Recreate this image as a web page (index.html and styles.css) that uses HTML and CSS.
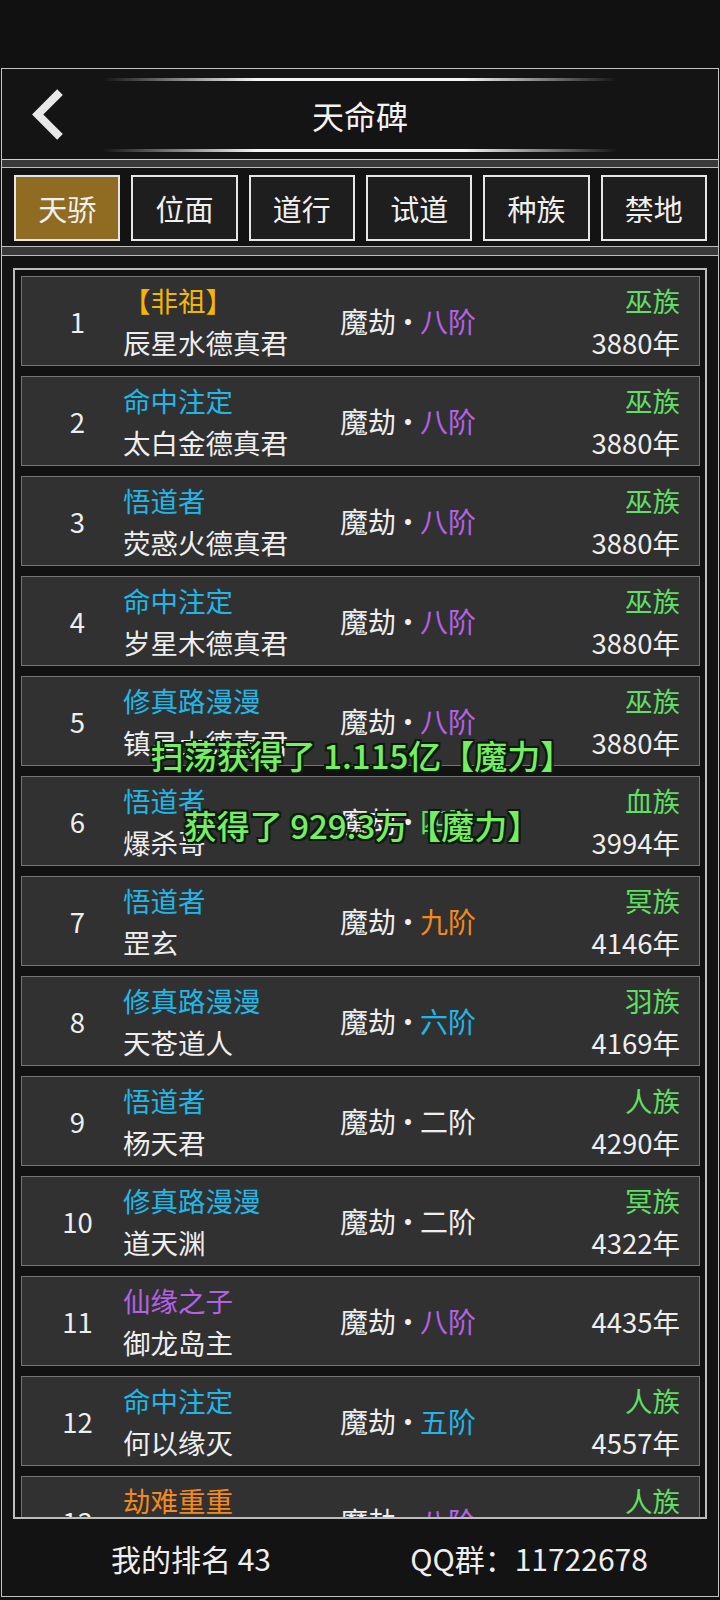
FILE: index.html
```
<!DOCTYPE html>
<html lang="zh-CN">
<head>
    <meta charset="UTF-8">
    <meta name="viewport" content="width=device-width, initial-scale=1.0">
    <title>天命碑</title>
    <link rel="stylesheet" href="styles.css">
</head>
<body>
    <div class="status-space"></div>

    <div class="frame">
        <div class="header">
            <div class="glow-line"></div>
            <div class="header-row">
                <a class="back" href="#">
                    <svg width="40" height="52" viewBox="0 0 40 52">
                        <polyline points="32,3.2 9.7,25.5 32,47.8" fill="none" stroke="#e8e8e8" stroke-width="8"/>
                    </svg>
                </a>
                <h1>天命碑</h1>
                <span></span>
            </div>
            <div class="glow-line"></div>
        </div>

        <div class="band"></div>

        <div class="tabs">
            <div class="tab active">天骄</div>
            <div class="tab">位面</div>
            <div class="tab">道行</div>
            <div class="tab">试道</div>
            <div class="tab">种族</div>
            <div class="tab">禁地</div>
        </div>

        <div class="band"></div>

        <div class="list-wrap">
            <div class="list">
                <div class="row">
                    <div class="rank">1</div>
                    <div class="who"><div class="gold">【非祖】</div><div>辰星水德真君</div></div>
                    <div class="realm">魔劫<span class="dot">·</span><span class="purple">八阶</span></div>
                    <div class="info"><div class="green">巫族</div><div>3880年</div></div>
                </div>
                <div class="row">
                    <div class="rank">2</div>
                    <div class="who"><div class="cyan">命中注定</div><div>太白金德真君</div></div>
                    <div class="realm">魔劫<span class="dot">·</span><span class="purple">八阶</span></div>
                    <div class="info"><div class="green">巫族</div><div>3880年</div></div>
                </div>
                <div class="row">
                    <div class="rank">3</div>
                    <div class="who"><div class="cyan">悟道者</div><div>荧惑火德真君</div></div>
                    <div class="realm">魔劫<span class="dot">·</span><span class="purple">八阶</span></div>
                    <div class="info"><div class="green">巫族</div><div>3880年</div></div>
                </div>
                <div class="row">
                    <div class="rank">4</div>
                    <div class="who"><div class="cyan">命中注定</div><div>岁星木德真君</div></div>
                    <div class="realm">魔劫<span class="dot">·</span><span class="purple">八阶</span></div>
                    <div class="info"><div class="green">巫族</div><div>3880年</div></div>
                </div>
                <div class="row">
                    <div class="rank">5</div>
                    <div class="who"><div class="cyan">修真路漫漫</div><div>镇星土德真君</div></div>
                    <div class="realm">魔劫<span class="dot">·</span><span class="purple">八阶</span></div>
                    <div class="info"><div class="green">巫族</div><div>3880年</div></div>
                </div>
                <div class="row">
                    <div class="rank">6</div>
                    <div class="who"><div class="cyan">悟道者</div><div>爆杀哥</div></div>
                    <div class="realm">魔劫<span class="dot">·</span><span class="green">四阶</span></div>
                    <div class="info"><div class="green">血族</div><div>3994年</div></div>
                </div>
                <div class="row">
                    <div class="rank">7</div>
                    <div class="who"><div class="cyan">悟道者</div><div>罡玄</div></div>
                    <div class="realm">魔劫<span class="dot">·</span><span class="orange">九阶</span></div>
                    <div class="info"><div class="green">冥族</div><div>4146年</div></div>
                </div>
                <div class="row">
                    <div class="rank">8</div>
                    <div class="who"><div class="cyan">修真路漫漫</div><div>天苍道人</div></div>
                    <div class="realm">魔劫<span class="dot">·</span><span class="cyan">六阶</span></div>
                    <div class="info"><div class="green">羽族</div><div>4169年</div></div>
                </div>
                <div class="row">
                    <div class="rank">9</div>
                    <div class="who"><div class="cyan">悟道者</div><div>杨天君</div></div>
                    <div class="realm">魔劫<span class="dot">·</span>二阶</div>
                    <div class="info"><div class="green">人族</div><div>4290年</div></div>
                </div>
                <div class="row">
                    <div class="rank">10</div>
                    <div class="who"><div class="cyan">修真路漫漫</div><div>道天渊</div></div>
                    <div class="realm">魔劫<span class="dot">·</span>二阶</div>
                    <div class="info"><div class="green">冥族</div><div>4322年</div></div>
                </div>
                <div class="row">
                    <div class="rank">11</div>
                    <div class="who"><div class="purple">仙缘之子</div><div>御龙岛主</div></div>
                    <div class="realm">魔劫<span class="dot">·</span><span class="purple">八阶</span></div>
                    <div class="info"><div>4435年</div></div>
                </div>
                <div class="row">
                    <div class="rank">12</div>
                    <div class="who"><div class="cyan">命中注定</div><div>何以缘灭</div></div>
                    <div class="realm">魔劫<span class="dot">·</span><span class="cyan">五阶</span></div>
                    <div class="info"><div class="green">人族</div><div>4557年</div></div>
                </div>
                <div class="row">
                    <div class="rank">13</div>
                    <div class="who"><div class="orange">劫难重重</div><div>风雨归人</div></div>
                    <div class="realm">魔劫<span class="dot">·</span><span class="purple">八阶</span></div>
                    <div class="info"><div class="green">人族</div><div>4620年</div></div>
                </div>
            </div>
        </div>

        <div class="footer">
            <div>我的排名 43</div>
            <div>QQ群：11722678</div>
        </div>

        <div class="toasts">
            <div class="toast">扫荡获得了 1.115亿【魔力】</div>
            <div class="toast">获得了 929.3万【魔力】</div>
        </div>
    </div>
</body>
</html>
```

FILE: styles.css
```
body {
    margin: 0;
    background-color: #111;
    color: #eee;
    font-family: "Noto Sans CJK SC", "Noto Sans", sans-serif;
}
.status-space {
    height: 68px;
}
.frame {
    position: relative;
    margin: 0 1px;
    border: 1px solid #c4c4c4;
    background-color: #131313;
}
.header {
    height: 91px;
    padding: 9px 0 7px;
    box-sizing: border-box;
    display: flex;
    flex-direction: column;
    border-bottom: 1px solid #cfcfcf;
    background-color: #141414;
}
.glow-line {
    width: 516px;
    height: 3px;
    margin: 0 auto;
    background: linear-gradient(90deg, rgba(255,255,255,0), #f4f4f4 30%, #f4f4f4 70%, rgba(255,255,255,0));
}
.header-row {
    flex: 1;
    display: grid;
    grid-template-columns: 100px 1fr 100px;
    align-items: center;
}
.back {
    display: flex;
    padding-left: 26px;
}
.header h1 {
    margin: 0;
    text-align: center;
    font-size: 32px;
    font-weight: 400;
    color: #f2f2f2;
}
.band {
    height: 7px;
    background-color: #3a3a3a;
    border-bottom: 1px solid #bdbdbd;
}
.tabs + .band {
    height: 8px;
    border-top: 1px solid #bdbdbd;
}
.tabs {
    display: flex;
    gap: 11px;
    padding: 7px 11px 5px 12px;
}
.tab {
    flex: 1;
    height: 66px;
    box-sizing: border-box;
    border: 2px solid #e6e6e6;
    background-color: #1e1e1e;
    display: flex;
    align-items: center;
    justify-content: center;
    font-size: 29px;
    color: #f0f0f0;
}
.tab.active {
    background-color: #8f6c22;
}
.list-wrap {
    padding: 12px 11px 0;
}
.list {
    height: 1251px;
    box-sizing: border-box;
    border: 2px solid #bcbcbc;
    padding: 6px 5px 0 6px;
    overflow: hidden;
    background-color: #121212;
}
.row {
    height: 90px;
    box-sizing: border-box;
    margin-bottom: 10px;
    border: 1px solid #747474;
    background-color: #313131;
    display: grid;
    grid-template-columns: 101px 217px 1fr auto;
    align-items: center;
    font-size: 27.5px;
}
.rank {
    padding-left: 10px;
    text-align: center;
}
.who div, .info div {
    line-height: 42px;
    white-space: nowrap;
}
.realm {
    font-size: 28px;
}
.dot {
    margin-right: -4px;
    position: relative;
    left: -2px;
}
.info {
    padding-right: 19px;
    text-align: right;
}
.gold { color: #f2b705; }
.cyan { color: #22b6e6; }
.purple { color: #b461e6; }
.orange { color: #f08a20; }
.green { color: #5ee062; }
.footer {
    height: 77px;
    display: grid;
    grid-template-columns: 1fr 1fr;
    align-items: center;
    padding: 0 20px;
    font-size: 30px;
    text-align: center;
    background-color: #131313;
}
.toasts {
    position: absolute;
    left: 0;
    right: 0;
    top: 663px;
    display: flex;
    flex-direction: column;
    align-items: center;
    gap: 24px;
    padding-left: 4px;
    pointer-events: none;
}
.toast {
    font-size: 33px;
    font-weight: 500;
    line-height: 46px;
    color: #76ee62;
    text-shadow: 2px 2px 0 #0d1a0d, -2px -2px 0 #0d1a0d, 2px -2px 0 #0d1a0d, -2px 2px 0 #0d1a0d, 0 2px 0 #0d1a0d, 2px 0 0 #0d1a0d, 0 -2px 0 #0d1a0d, -2px 0 0 #0d1a0d;
}
```
